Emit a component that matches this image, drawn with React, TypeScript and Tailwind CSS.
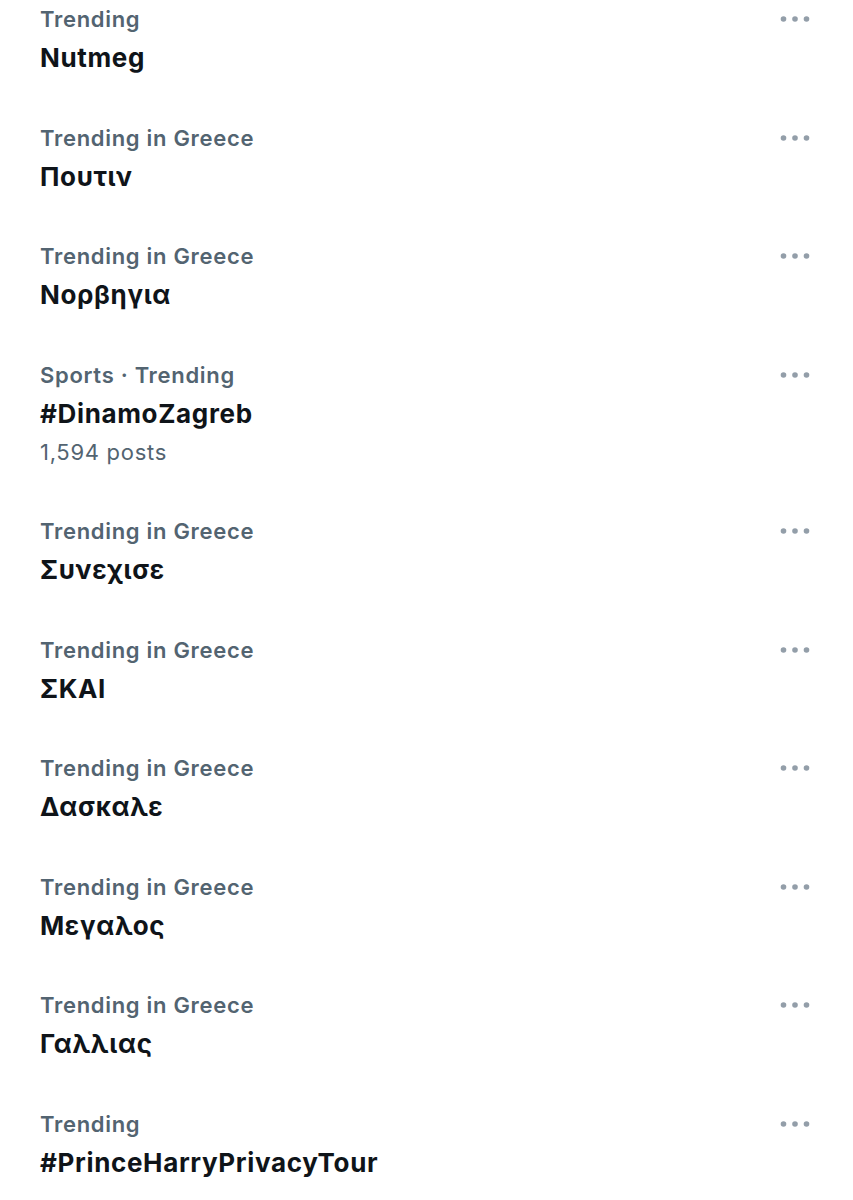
import React from "react";

type Trend = { cat: string; title: string; posts?: string };

const trends: Trend[] = [
  { cat: "Trending", title: "Nutmeg" },
  { cat: "Trending in Greece", title: "Πουτιν" },
  { cat: "Trending in Greece", title: "Νορβηγια" },
  { cat: "Sports · Trending", title: "#DinamoZagreb", posts: "1,594 posts" },
  { cat: "Trending in Greece", title: "Συνεχισε" },
  { cat: "Trending in Greece", title: "ΣΚΑΙ" },
  { cat: "Trending in Greece", title: "Δασκαλε" },
  { cat: "Trending in Greece", title: "Μεγαλος" },
  { cat: "Trending in Greece", title: "Γαλλιας" },
  { cat: "Trending", title: "#PrinceHarryPrivacyTour" },
];

function Dots() {
  return (
    <svg width="30" height="8" viewBox="0 0 30 8" className="shrink-0">
      <circle cx="3.5" cy="4" r="2.8" fill="#939ea9" />
      <circle cx="15" cy="4" r="2.8" fill="#939ea9" />
      <circle cx="26.5" cy="4" r="2.8" fill="#939ea9" />
    </svg>
  );
}

export default function App() {
  return (
    <div
      className="w-[853px] h-[1200px] bg-white overflow-hidden"
      style={{ fontFamily: "Inter, 'Noto Sans', sans-serif" }}
    >
      {trends.map((t, i) => (
        <div key={i} className="flex pl-[40px] pr-[43px] pb-[41.5px]">
          <div className="flex-1 flex flex-col">
            <div className="text-[22px] leading-[38px] font-semibold text-[#536471] tracking-[0.7px]">
              {t.cat}
            </div>
            <div className="text-[26px] leading-[39px] font-bold text-[#0f1419] tracking-[0.65px]">
              {t.title}
            </div>
            {t.posts && (
              <div className="text-[22px] leading-[38px] font-normal text-[#536471] tracking-[0.7px]">
                {t.posts}
              </div>
            )}
          </div>
          <div className="h-[38px] flex items-center">
            <Dots />
          </div>
        </div>
      ))}
    </div>
  );
}
